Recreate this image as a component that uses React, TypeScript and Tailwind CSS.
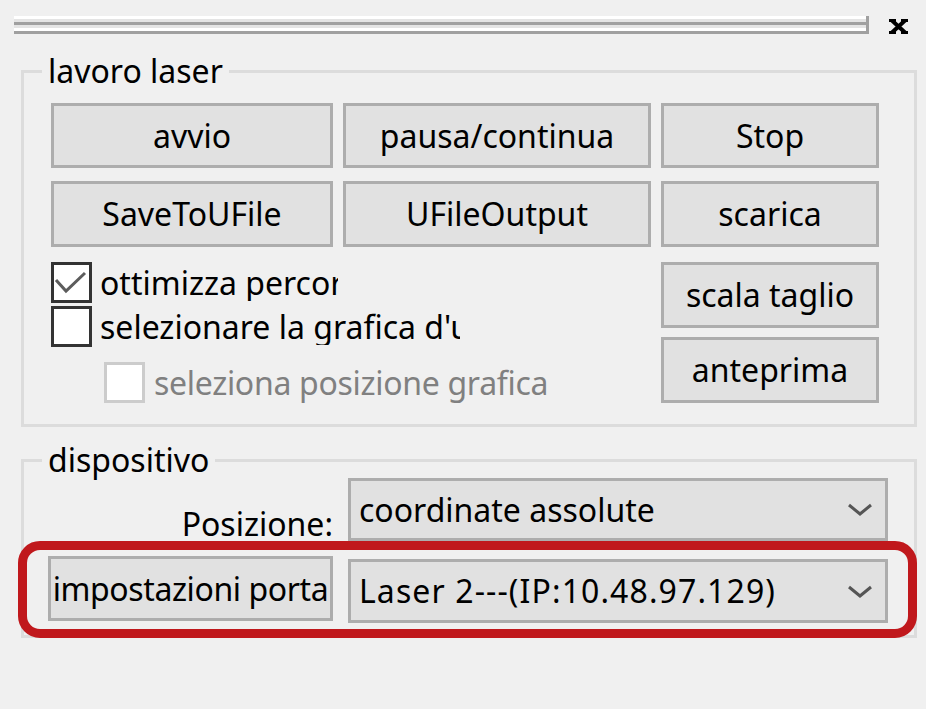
import clsx from "clsx";
import type { ReactNode } from "react";

function Btn({ children, className }: { children: ReactNode; className?: string }) {
  return (
    <button
      className={clsx(
        "flex items-center justify-center overflow-hidden whitespace-nowrap border-[3px] border-[#adadad] bg-[#e1e1e1] text-[32px] leading-[36px] text-black",
        className
      )}
    >
      {children}
    </button>
  );
}

function Check({ checked, disabled }: { checked?: boolean; disabled?: boolean }) {
  return (
    <span
      className={clsx(
        "flex h-[41px] w-[41px] shrink-0 border-[3px] bg-white",
        disabled ? "border-[#cccccc]" : "border-[#333333]"
      )}
    >
      {checked && (
        <svg width="35" height="35" viewBox="0 0 35 35">
          <polyline points="2,15 12,26 31,8" fill="none" stroke="#5c5c5c" strokeWidth="3" />
        </svg>
      )}
    </span>
  );
}

function Combo({ value, className, textClass }: { value: string; className?: string; textClass?: string }) {
  return (
    <div
      className={clsx(
        "flex w-[540px] items-center justify-between border-[3px] border-[#adadad] bg-[#e1e1e1] pl-[8px] pr-[12px] text-[32px] leading-[36px] text-black",
        className
      )}
    >
      <span className={clsx("whitespace-nowrap", textClass)}>{value}</span>
      <svg width="26" height="15" viewBox="0 0 26 15">
        <polyline points="2,3 13,12 24,3" fill="none" stroke="#555555" strokeWidth="3" />
      </svg>
    </div>
  );
}

export default function App() {
  return (
    <div className="relative h-[709px] w-[926px] overflow-hidden bg-[#f0f0f0] pt-[16px] font-['Noto_Sans',sans-serif] text-black">
      {/* title strip */}
      <div className="flex items-start pl-[14px]">
        <div className="flex h-[18px] w-[855px] flex-col border-r-[3px] border-[#a0a0a0]">
          <div className="h-[3px] bg-white" />
          <div className="h-[3px] bg-[#e4e4e4]" />
          <div className="h-[3px] bg-[#a0a0a0]" />
          <div className="h-[3px] bg-[#e4e4e4]" />
          <div className="h-[3px] bg-white" />
          <div className="h-[3px] bg-[#a0a0a0]" />
        </div>
        <svg className="ml-[20px] mt-[3px]" width="19" height="15" viewBox="0 0 19 15">
          <path d="M3 1.5 L16 13.5 M16 1.5 L3 13.5" stroke="#000" strokeWidth="4" />
          <rect x="0" y="0" width="7" height="3" fill="#000" />
          <rect x="12" y="0" width="7" height="3" fill="#000" />
          <rect x="0" y="12" width="7" height="3" fill="#000" />
          <rect x="12" y="12" width="7" height="3" fill="#000" />
        </svg>
      </div>

      {/* lavoro laser */}
      <fieldset className="ml-[21px] mt-[19px] w-[896px] border-[3px] border-[#dcdcdc]">
        <legend className="ml-[18px] px-[6px] text-[32px] leading-[36px]">lavoro laser</legend>
        <div className="pb-[21px] pl-[27px] pr-[35px] pt-[14px]">
          <div className="grid grid-cols-[282px_308px_218px] gap-x-[10px] gap-y-[13px]">
            <Btn className="h-[65px]">avvio</Btn>
            <Btn className="h-[65px]">pausa/continua</Btn>
            <Btn className="h-[65px]">Stop</Btn>
            <Btn className="h-[66px]">SaveToUFile</Btn>
            <Btn className="h-[66px]">UFileOutput</Btn>
            <Btn className="h-[66px]">scarica</Btn>
          </div>
          <div className="mt-[15px] flex">
            <div className="flex flex-1 flex-col">
              <label className="flex h-[41px] items-center">
                <Check checked />
                <span className="ml-[8px] w-[238px] overflow-hidden whitespace-nowrap text-[32px] leading-[36px]">
                  ottimizza percorso
                </span>
              </label>
              <label className="mt-[3px] flex h-[41px] items-center">
                <Check />
                <span className="ml-[8px] w-[360px] overflow-hidden whitespace-nowrap text-[32px] leading-[36px]">
                  selezionare la grafica d'uscita
                </span>
              </label>
              <label className="ml-[53px] mt-[15px] flex h-[41px] items-center">
                <Check disabled />
                <span className="ml-[9px] whitespace-nowrap text-[32px] leading-[36px] tracking-[-0.3px] text-[#808080]">
                  seleziona posizione grafica
                </span>
              </label>
            </div>
            <div className="flex w-[218px] flex-col gap-[9px]">
              <Btn className="h-[66px]">scala taglio</Btn>
              <Btn className="h-[66px]">anteprima</Btn>
            </div>
          </div>
        </div>
      </fieldset>

      {/* dispositivo */}
      <fieldset className="ml-[21px] mt-[15px] w-[896px] border-[3px] border-[#dcdcdc]">
        <legend className="ml-[18px] px-[6px] text-[32px] leading-[36px]">dispositivo</legend>
        <div className="flex flex-col gap-[15px] pb-[12px] pl-[24px] pr-[26px]">
          <div className="flex gap-[15px]">
            <div className="flex h-[63px] w-[285px] items-end justify-end text-[32px] leading-[34px]">
              Posizione:
            </div>
            <Combo className="h-[63px]" value="coordinate assolute" />
          </div>
          <div className="flex items-start gap-[15px]">
            <Btn className="h-[65px] w-[285px] tracking-[-0.4px]">impostazioni porta</Btn>
            <Combo className="mt-[3px] h-[64px]" textClass="tracking-[1.1px]" value="Laser 2---(IP:10.48.97.129)" />
          </div>
        </div>
      </fieldset>

      {/* highlight annotation */}
      <div className="absolute left-[18px] top-[541px] h-[97px] w-[899px] rounded-[22px] border-[9px] border-[#c0181c]" />
    </div>
  );
}
